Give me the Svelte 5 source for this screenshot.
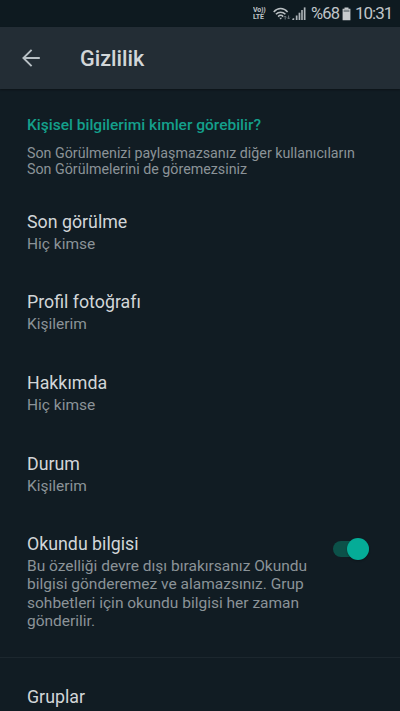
<script>
    let readReceipts = $state(true);

    const items = [
        { title: 'Son görülme', value: 'Hiç kimse' },
        { title: 'Profil fotoğrafı', value: 'Kişilerim' },
        { title: 'Hakkımda', value: 'Hiç kimse' },
        { title: 'Durum', value: 'Kişilerim' }
    ];
</script>

<div class="screen">
    <div class="status-bar">
        <div class="volte"><span>Vo))</span><span>LTE</span></div>
        <svg class="wifi" width="18" height="14" viewBox="0 0 18 14" fill="none" stroke="#b9bfc2" stroke-width="1.5">
            <path d="M.7 4.9C4.8.4 10.5.4 14.6 4.9" />
            <path d="M2.9 7.3C5.6 4.4 9.7 4.4 12.4 7.3" />
            <path d="M5.1 9.6C6.8 7.9 8.5 7.9 10.2 9.6" />
            <path d="M6.3 10.7h2.8L7.7 12.4z" fill="#b9bfc2" stroke="none" />
            <path d="M12.2 12.5V9M11 10.3l1.2-1.3 1.2 1.3M15.6 8.5V12M14.4 10.7l1.2 1.3 1.2-1.3" stroke="#6d767b" stroke-width="1" />
        </svg>
        <svg class="signal" width="14" height="14" viewBox="0 0 14 14" fill="#aeb5b9">
            <path d="M.3 13V11.8L2.2 11v2z" />
            <rect x="3.8" y="8.5" width="1.7" height="4.5" />
            <rect x="6.6" y="5.7" width="1.7" height="7.3" />
            <rect x="9.2" y="3" width="1.6" height="10" />
            <rect x="11.8" y=".4" width="1.7" height="12.6" />
        </svg>
        <span class="percent">%68</span>
        <svg class="battery" width="9" height="14" viewBox="0 0 9 14">
            <path d="M2.5.5h4v1.3H8.4V13.2H.6V1.8h1.9z" fill="#c7cbcd" />
            <rect x="1.6" y="2.7" width="5.8" height="2.3" fill="#838b8f" />
        </svg>
        <span class="clock">10:31</span>
    </div>

    <header>
        <button class="back" aria-label="Geri">
            <svg width="18" height="18" viewBox="0 0 18 18" fill="none" stroke="#b8c0c5" stroke-width="1.9">
                <path d="M17.8 9H1.5M9.6 .8L1.4 9l8.2 8.2" />
            </svg>
        </button>
        <h1>Gizlilik</h1>
    </header>

    <main>
        <section class="intro">
            <h2>Kişisel bilgilerimi kimler görebilir?</h2>
            <p>Son Görülmenizi paylaşmazsanız diğer kullanıcıların<br />Son Görülmelerini de göremezsiniz</p>
        </section>

        {#each items as item}
            <div class="item">
                <div class="title">{item.title}</div>
                <div class="value">{item.value}</div>
            </div>
        {/each}

        <div class="item receipts">
            <div>
                <div class="title">Okundu bilgisi</div>
                <div class="value">
                    Bu özelliği devre dışı bırakırsanız Okundu<br />
                    bilgisi gönderemez ve alamazsınız. Grup<br />
                    sohbetleri için okundu bilgisi her zaman<br />
                    gönderilir.
                </div>
            </div>
            <button
                class="switch"
                class:on={readReceipts}
                role="switch"
                aria-checked={readReceipts}
                aria-label="Okundu bilgisi"
                onclick={() => (readReceipts = !readReceipts)}
            >
                <span class="thumb"></span>
            </button>
        </div>

        <div class="item groups">
            <div class="title">Gruplar</div>
        </div>
    </main>
</div>

<style>
    :global(body) {
        background: #111c23;
    }

    .screen {
        height: 711px;
        overflow: hidden;
        background: #111c23;
        font-family: Roboto, sans-serif;
        color: #d2d6d8;
    }

    .status-bar {
        display: flex;
        align-items: center;
        justify-content: flex-end;
        height: 27px;
        padding-right: 8px;
        box-sizing: border-box;
        background: #0e1a20;
        color: #c0c5c8;
        font-size: 17px;
        line-height: 27px;
        white-space: nowrap;
    }

    .volte {
        display: flex;
        flex-direction: column;
        width: 15px;
        margin-right: 5px;
        font-size: 7px;
        font-weight: 700;
        line-height: 7px;
        letter-spacing: -0.2px;
    }

    .volte span {
        height: 7px;
        overflow: hidden;
    }

    .wifi {
        margin-right: 1px;
    }

    .signal {
        margin-right: 5px;
    }

    .percent {
        width: 27px;
        margin-right: 4px;
        font-size: 16.5px;
        letter-spacing: -0.8px;
    }

    .battery {
        margin-right: 4px;
    }

    .clock {
        width: 37px;
        letter-spacing: -1px;
    }

    header {
        display: flex;
        align-items: center;
        height: 62px;
        padding-left: 22px;
        background: #232d35;
        box-shadow: 0 1px 2px rgba(0, 0, 0, 0.35);
    }

    button {
        padding: 0;
        border: none;
        background: none;
        cursor: pointer;
    }

    .back {
        display: flex;
        width: 58px;
    }

    h1 {
        margin: 2px 0 0;
        font-size: 21.6px;
        font-weight: 500;
        line-height: 28px;
    }

    .intro {
        padding: 26px 27px 12.5px;
    }

    h2 {
        margin: 0 0 9.5px;
        color: #14a08c;
        font-size: 15.5px;
        font-weight: 500;
        line-height: 20px;
        white-space: nowrap;
    }

    p {
        margin: 0;
        color: #8b9398;
        font-size: 14.25px;
        line-height: 16.8px;
        white-space: nowrap;
    }

    .item {
        padding: 18.2px 27px 18.1px;
    }

    .title {
        font-size: 17.8px;
        line-height: 26px;
    }

    .value {
        color: #8b9398;
        font-size: 15.5px;
        line-height: 18.3px;
        white-space: nowrap;
    }

    .receipts {
        display: flex;
        justify-content: space-between;
        padding-bottom: 27px;
        border-bottom: 1px solid #1c272e;
    }

    .switch {
        display: flex;
        align-items: center;
        width: 36px;
        height: 16px;
        margin: 10px 4px 0 0;
        border-radius: 8px;
        background: #3b454b;
    }

    .thumb {
        width: 22px;
        height: 22px;
        flex: none;
        border-radius: 50%;
        background: #b9bfc2;
        box-shadow: 0 1px 2px rgba(0, 0, 0, 0.3);
    }

    .switch.on {
        justify-content: flex-end;
        background: #0c5149;
    }

    .switch.on .thumb {
        background: #05ac97;
    }

    .groups {
        padding-top: 26px;
    }
</style>
